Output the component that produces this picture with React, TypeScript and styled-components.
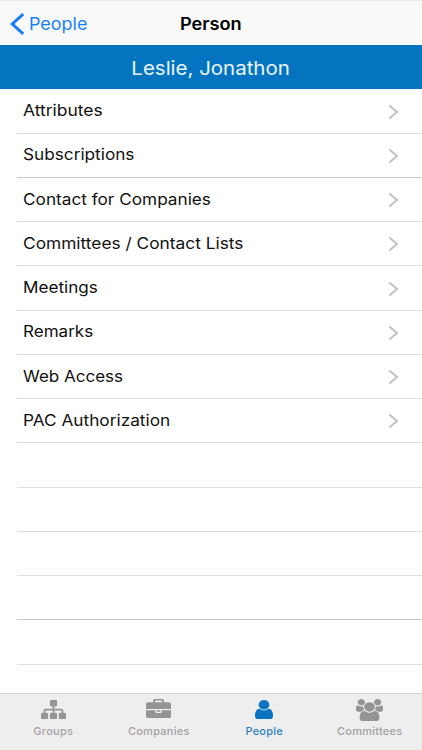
import React from "react";
import styled, { createGlobalStyle } from "styled-components";

const GlobalStyle = createGlobalStyle`
  * { box-sizing: border-box; }
  body { margin: 0; background: #fff; font-family: Inter, "Liberation Sans", sans-serif; }
`;

const Screen = styled.div`
  width: 422px;
  height: 750px;
  display: flex;
  flex-direction: column;
  overflow: hidden;
  background: #fff;
`;

const NavBar = styled.header`
  height: 45px;
  flex: none;
  display: grid;
  grid-template-columns: 1fr auto 1fr;
  align-items: center;
  background: #f9f9f9;
  border-top: 1px solid #ececec;
`;

const BackButton = styled.button`
  display: flex;
  align-items: center;
  gap: 4px;
  padding: 1px 0 0 10px;
  border: 0;
  background: none;
  color: #157efb;
  font: 400 17px Inter, sans-serif;
`;

const Stretch = styled.span<{ $x: number; $origin?: string }>`
  display: inline-block;
  white-space: nowrap;
  transform: scaleX(${(p) => p.$x});
  transform-origin: ${(p) => p.$origin ?? "center"};
`;

const Title = styled.h1`
  margin: 1px 0 0;
  color: #000;
  font-size: 17px;
  font-weight: 600;
`;

const NameBanner = styled.div`
  height: 44px;
  flex: none;
  display: flex;
  align-items: center;
  justify-content: center;
  padding: 2px 0 0;
  background: #0474c0;
  color: #e9f6fd;
  font-size: 19px;
`;

const List = styled.ul`
  flex: 1;
  min-height: 0;
  overflow: hidden;
  margin: 0;
  padding: 0.4px 0 0 17px;
  list-style: none;
`;

const Row = styled.li<{ $strong?: boolean }>`
  height: 44.25px;
  display: flex;
  align-items: center;
  justify-content: space-between;
  padding: 0 23px 0 6px;
  border-bottom: 1px solid ${(p) => (p.$strong ? "#c8c8cc" : "#dedede")};
  color: #111;
  font-size: 16px;
  line-height: 20px;
`;

const RowLabel = styled(Stretch)`
  margin-bottom: 1.6px;
`;

const ChevronIcon = styled.svg`
  display: block;
  margin-top: 1px;
  fill: none;
  stroke: #c4c4c7;
  stroke-width: 2.2;
`;

const TabBar = styled.nav`
  height: 57.5px;
  flex: none;
  display: grid;
  grid-template-columns: repeat(4, 1fr);
  background: #eee;
  border-top: 1px solid #d8d8d8;
`;

const Tab = styled.div<{ $active?: boolean }>`
  display: flex;
  flex-direction: column;
  align-items: center;
  color: ${(p) => (p.$active ? "#0b74c1" : "#949494")};
  font-size: 11px;
  font-weight: 500;
`;

const IconBox = styled.div`
  height: 30.4px;
  padding-left: 1px;
`;

const TabIcon = styled.svg<{ $top: number }>`
  display: block;
  margin-top: ${(p) => p.$top}px;
  fill: currentColor;
`;

const TabLabel = styled.span<{ $active?: boolean }>`
  padding-left: 1px;
  line-height: 14px;
  letter-spacing: 0.25px;
  color: ${(p) => (p.$active ? "#2e82c4" : "#a3a3a3")};
`;

const rows = [
  { label: "Attributes", stretch: 1.09 },
  { label: "Subscriptions", stretch: 1.075 },
  { label: "Contact for Companies", stretch: 1.075 },
  { label: "Committees / Contact Lists", stretch: 1.082 },
  { label: "Meetings", stretch: 1.07 },
  { label: "Remarks", stretch: 1.065 },
  { label: "Web Access", stretch: 1.063 },
  { label: "PAC Authorization", stretch: 1.077 },
];

const tabs = [
  {
    label: "Groups", w: 25, h: 19.3, top: 6.6, box: "0 128 1792 1536",
    d: "M1792 1248v320q0 40-28 68t-68 28h-320q-40 0-68-28t-28-68v-320q0-40 28-68t68-28h96v-192h-512v192h96q40 0 68 28t28 68v320q0 40-28 68t-68 28h-320q-40 0-68-28t-28-68v-320q0-40 28-68t68-28h96v-192h-512v192h96q40 0 68 28t28 68v320q0 40-28 68t-68 28h-320q-40 0-68-28t-28-68v-320q0-40 28-68t68-28h96v-192q0-52 38-90t90-38h512v-192h-96q-40 0-68-28t-28-68v-320q0-40 28-68t68-28h320q40 0 68 28t28 68v320q0 40-28 68t-68 28h-96v192h512q52 0 90 38t38 90v192h96q40 0 68 28t28 68z",
  },
  {
    label: "Companies", w: 25, h: 19.3, top: 5.1, box: "0 0 1792 1536",
    d: "M640 256h512v-128h-512v128zm1152 640v480q0 66-47 113t-113 47h-1472q-66 0-113-47t-47-113v-480h672v160q0 26 19 45t45 19h320q26 0 45-19t19-45v-160h672zm-768 0v128h-256v-128h256zm768-480v384h-1792v-384q0-66 47-113t113-47h352v-160q0-40 28-68t68-28h576q40 0 68 28t28 68v160h352q66 0 113 47t47 113z",
  },
  {
    label: "People", w: 18, h: 19.3, top: 6.6, box: "256 128 1280 1536", active: true,
    d: "M1536 1399q0 109-62.5 187t-150.5 78h-854q-88 0-150.5-78t-62.5-187q0-85 8.5-160.5t31.5-152 58.5-131 94-89 134.5-34.5q131 128 313 128t313-128q76 0 134.5 34.5t94 89 58.5 131 31.5 152 8.5 160.5zm-256-887q0 159-112.5 271.5t-271.5 112.5-271.5-112.5-112.5-271.5 112.5-271.5 271.5-112.5 271.5 112.5 112.5 271.5z",
  },
  {
    label: "Committees", w: 27, h: 22.3, top: 5, box: "-64 0 1920 1792",
    d: "M529 896q-162 5-265 128h-134q-82 0-138-40.5t-56-118.5q0-353 124-353 6 0 43.5 21t97.5 42.5 119 21.5q67 0 133-23-5 37-5 66 0 139 81 256zm1071 637q0 120-73 189.5t-194 69.5h-874q-121 0-194-69.5t-73-189.5q0-53 3.5-103.5t14-109 26.5-108.5 43-97.5 62-81 85.5-53.5 111.5-20q10 0 43 21.5t73 48 107 48 135 21.5 135-21.5 107-48 73-48 43-21.5q61 0 111.5 20t85.5 53.5 62 81 43 97.5 26.5 108.5 14 109 3.5 103.5zm-1024-1277q0 106-75 181t-181 75-181-75-75-181 75-181 181-75 181 75 75 181zm704 384q0 159-112.5 271.5t-271.5 112.5-271.5-112.5-112.5-271.5 112.5-271.5 271.5-112.5 271.5 112.5 112.5 271.5zm576 225q0 78-56 118.5t-138 40.5h-134q-103-123-265-128 81-117 81-256 0-29-5-66 66 23 133 23 59 0 119-21.5t97.5-42.5 43.5-21q124 0 124 353zm-128-609q0 106-75 181t-181 75-181-75-75-181 75-181 181-75 181 75 75 181z",
  },
];

const emptyRows = [false, false, false, true, false];

function Chevron() {
  return (
    <ChevronIcon width="11" height="16" viewBox="0 0 11 16">
      <path d="M1.3 1.5 9 8 1.3 14.5" />
    </ChevronIcon>
  );
}

export default function App() {
  return (
    <Screen>
      <GlobalStyle />
      <NavBar>
        <BackButton>
          <svg width="15" height="22" viewBox="0 0 15 22" fill="none" stroke="currentColor" strokeWidth="3">
            <path d="M13.2 1.2 2.3 11 13.2 20.8" />
          </svg>
          <Stretch $x={1.055} $origin="left">People</Stretch>
        </BackButton>
        <Title><Stretch $x={1.07}>Person</Stretch></Title>
      </NavBar>
      <NameBanner><Stretch $x={1.077}>Leslie, Jonathon</Stretch></NameBanner>
      <List>
        {rows.map((row, i) => (
          <Row key={row.label} $strong={i === 1}>
            <RowLabel $x={row.stretch} $origin="left">{row.label}</RowLabel>
            <Chevron />
          </Row>
        ))}
        {emptyRows.map((strong, i) => <Row key={i} $strong={strong} />)}
      </List>
      <TabBar>
        {tabs.map((tab) => (
          <Tab key={tab.label} $active={tab.active}>
            <IconBox>
              <TabIcon $top={tab.top} width={tab.w} height={tab.h} viewBox={tab.box} preserveAspectRatio="none">
                <path d={tab.d} />
              </TabIcon>
            </IconBox>
            <TabLabel $active={tab.active}>{tab.label}</TabLabel>
          </Tab>
        ))}
      </TabBar>
    </Screen>
  );
}
